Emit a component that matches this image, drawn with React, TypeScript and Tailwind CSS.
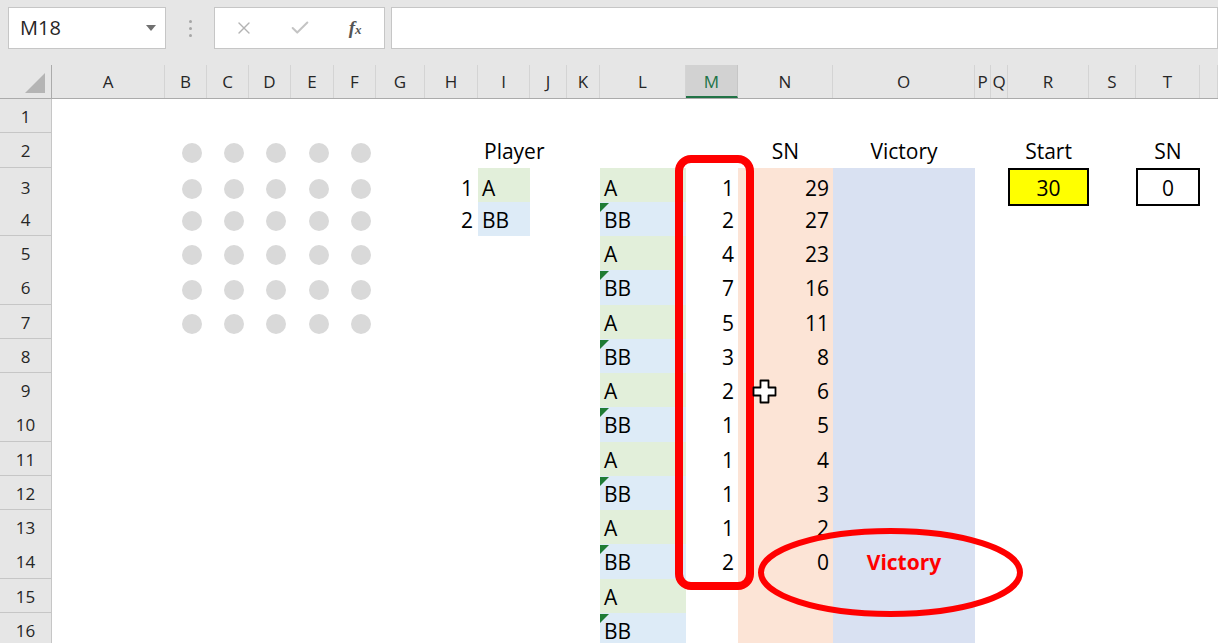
import React from 'react';
import { X, Check } from 'lucide-react';

type Col = { key: string; w: number };

const cols: Col[] = [
  { key: 'A', w: 113 },
  { key: 'B', w: 42 },
  { key: 'C', w: 42 },
  { key: 'D', w: 42 },
  { key: 'E', w: 43 },
  { key: 'F', w: 42 },
  { key: 'G', w: 49 },
  { key: 'H', w: 53 },
  { key: 'I', w: 52 },
  { key: 'J', w: 37 },
  { key: 'K', w: 33 },
  { key: 'L', w: 86 },
  { key: 'M', w: 52 },
  { key: 'N', w: 95 },
  { key: 'O', w: 142 },
  { key: 'P', w: 16 },
  { key: 'Q', w: 17 },
  { key: 'R', w: 81 },
  { key: 'S', w: 47 },
  { key: 'T', w: 64 },
  { key: 'U', w: 18 },
];

const gridCols =
  'grid grid-cols-[52px_113px_42px_42px_42px_43px_42px_49px_53px_52px_37px_33px_86px_52px_95px_142px_16px_17px_81px_47px_64px_1fr]';

const moves = [1, 2, 4, 7, 5, 3, 2, 1, 1, 1, 1, 2];
const remain = [29, 27, 23, 16, 11, 8, 6, 5, 4, 3, 2, 0];

const Circle = () => (
  <div className="w-full h-full flex items-center justify-end pr-[5px] pt-[4px]">
    <div className="w-5 h-5 rounded-full bg-[#d9d9d9]" />
  </div>
);

// little green marker excel puts on flagged cells
const Corner = () => (
  <span className="absolute left-0 top-[1px] w-0 h-0 border-t-[9px] border-t-[#1e7b34] border-r-[9px] border-r-transparent" />
);

function renderCell(row: number, col: string) {
  const base = 'relative h-full flex items-center pt-[3px] whitespace-nowrap';

  if (row >= 2 && row <= 7 && ['B', 'C', 'D', 'E', 'F'].includes(col)) {
    return <Circle />;
  }

  if (row === 2) {
    if (col === 'I') return <div className={`${base} pl-[6px] overflow-visible`}>Player</div>;
    if (col === 'N') return <div className={`${base} justify-center`}>SN</div>;
    if (col === 'O') return <div className={`${base} justify-center`}>Victory</div>;
    if (col === 'R') return <div className={`${base} justify-center`}>Start</div>;
    if (col === 'T') return <div className={`${base} justify-center`}>SN</div>;
  }

  if ((row === 3 || row === 4) && col === 'H') {
    return <div className={`${base} justify-end pr-[5px]`}>{row - 2}</div>;
  }
  if ((row === 3 || row === 4) && col === 'I') {
    return (
      <div className={`${base} pl-[4px] ${row === 3 ? 'bg-[#e2efda]' : 'bg-[#ddebf7]'}`}>
        {row === 3 ? 'A' : 'BB'}
      </div>
    );
  }

  if (row >= 3 && col === 'L') {
    const isA = row % 2 === 1;
    return (
      <div className={`${base} pl-[4px] ${isA ? 'bg-[#e2efda]' : 'bg-[#ddebf7]'}`}>
        {!isA && <Corner />}
        {isA ? 'A' : 'BB'}
      </div>
    );
  }

  if (row >= 3 && col === 'M') {
    const v = moves[row - 3];
    return <div className={`${base} justify-end pr-[4px]`}>{v ?? ''}</div>;
  }

  if (row >= 3 && col === 'N') {
    const v = remain[row - 3];
    return <div className={`${base} justify-end pr-[4px] bg-[#fce4d6]`}>{v ?? ''}</div>;
  }

  if (row >= 3 && col === 'O') {
    return (
      <div className={`${base} justify-center bg-[#d9e1f2] font-bold text-[#ff0000]`}>
        {row === 14 ? 'Victory' : ''}
      </div>
    );
  }

  if (row === 3 && col === 'R') {
    return (
      <div className={`${base} justify-center bg-[#ffff00] border-2 border-black pt-[1px]`}>30</div>
    );
  }
  if (row === 3 && col === 'T') {
    return <div className={`${base} justify-center border-2 border-black pt-[1px]`}>0</div>;
  }

  return <div className="h-full" />;
}

const FormulaBar = () => (
  <div className="h-[65px] bg-[#e6e6e6] flex items-start pt-[7px] pl-[8px] font-['Open_Sans',sans-serif]">
    <div className="w-[158px] h-[42px] bg-white border border-[#c6c6c6] flex items-center pl-[11px] pr-[9px] text-[20px] text-[#262626]">
      <span className="flex-1">M18</span>
      <span className="w-0 h-0 border-l-[5px] border-l-transparent border-r-[5px] border-r-transparent border-t-[6px] border-t-[#707070]" />
    </div>
    <div className="w-[48px] h-[42px] flex flex-col items-center justify-center gap-[4px]">
      <span className="w-[3px] h-[3px] rounded-full bg-[#a6a6a6]" />
      <span className="w-[3px] h-[3px] rounded-full bg-[#a6a6a6]" />
      <span className="w-[3px] h-[3px] rounded-full bg-[#a6a6a6]" />
    </div>
    <div className="w-[171px] h-[42px] bg-white border border-[#c6c6c6] flex items-center">
      <div className="w-[58px] flex justify-center">
        <X className="w-[20px] h-[20px] text-[#b3b3b3]" strokeWidth={1.6} />
      </div>
      <div className="w-[54px] flex justify-center">
        <Check className="w-[22px] h-[22px] text-[#c4c4c4]" strokeWidth={2.2} />
      </div>
      <div className="w-[58px] flex justify-center items-baseline font-['Liberation_Serif',serif] italic text-[#555]">
        <span className="text-[19px] font-bold">f</span>
        <span className="text-[13px] font-bold">x</span>
      </div>
    </div>
    <div className="ml-[6px] flex-1 h-[42px] bg-white border border-[#c6c6c6]" />
  </div>
);

const HeaderRow = () => (
  <div className={`${gridCols} h-[34px] bg-[#e6e6e6] border-b border-[#ababab] text-[17px] text-[#262626]`}>
    <div className="relative border-r border-[#ababab]">
      <span className="absolute right-[6px] bottom-[5px] w-0 h-0 border-l-[20px] border-l-transparent border-b-[20px] border-b-[#b4b4b4]" />
    </div>
    {cols.map((c) => (
      <div
        key={c.key}
        className={
          c.key === 'M'
            ? 'flex items-center justify-center border-r border-[#c6c6c6] bg-[#d2d2d2] text-[#217346] border-b-2 border-b-[#217346] pt-[2px]'
            : 'flex items-center justify-center border-r border-[#d4d4d4]'
        }
      >
        {c.key === 'U' ? '' : c.key}
      </div>
    ))}
  </div>
);

export default function App() {
  const rows = Array.from({ length: 16 }, (_, i) => i + 1);

  return (
    <div className="relative w-[1218px] h-[643px] overflow-hidden bg-white font-['Open_Sans',sans-serif]">
      <FormulaBar />
      <HeaderRow />
      <div>
        {rows.map((r) => (
          <div key={r} className={`${gridCols} h-[34.25px] text-[21px] text-black`}>
            <div className="flex items-center justify-center bg-[#e6e6e6] border-r border-[#ababab] border-b border-[#c6c6c6] text-[17px] text-[#262626] pt-[2px]">
              {r}
            </div>
            {cols.map((c) => (
              <div key={c.key} className="h-full min-w-0">
                {renderCell(r, c.key)}
              </div>
            ))}
          </div>
        ))}
      </div>

      {/* red highlight around column M */}
      <div className="absolute left-[675px] top-[155px] w-[79px] h-[435px] border-[8px] border-[#ff0000] rounded-[16px] pointer-events-none" />

      {/* red ellipse around result */}
      <svg className="absolute left-[755px] top-[525px]" width="272" height="96" viewBox="0 0 272 96">
        <ellipse cx="135.5" cy="47.5" rx="129.5" ry="41.5" fill="none" stroke="#ff0000" strokeWidth="6" />
      </svg>

      {/* excel cell cursor */}
      <svg className="absolute left-[752px] top-[379px]" width="25" height="25" viewBox="0 0 25 25">
        <path
          d="M8.5 1.5h8v7h7v8h-7v7h-8v-7h-7v-8h7z"
          fill="#fff"
          stroke="#000"
          strokeWidth="1.8"
          strokeLinejoin="round"
        />
      </svg>
    </div>
  );
}
